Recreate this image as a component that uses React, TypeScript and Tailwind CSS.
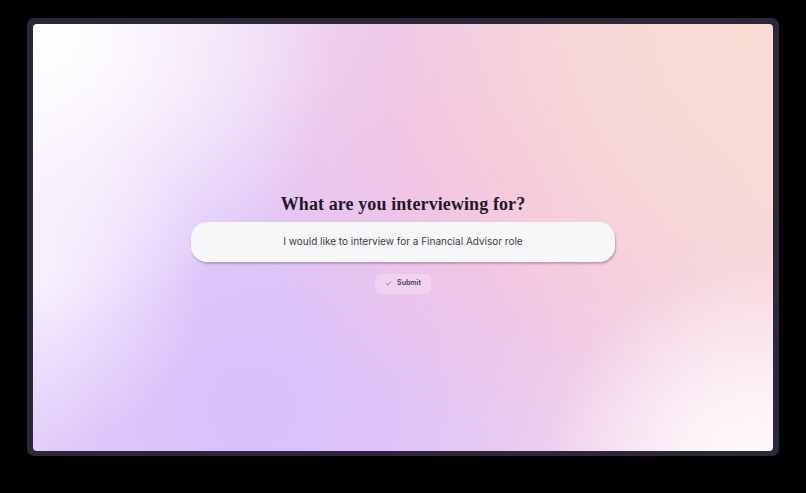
import { Check } from 'lucide-react';

const App = () => {
  return (
    <div className="w-[806px] h-[493px] bg-black flex items-start justify-center pt-[18px] font-['Inter',sans-serif]">
      {/* Marco oscuro */}
      <div className="w-[752px] h-[438px] rounded-[7px] bg-[#2b2839] p-[6px] pb-[5px]">
        <div className="w-full h-full rounded-[4px] overflow-hidden bg-[#efd0ec] bg-[radial-gradient(circle_at_0%_0%,#ffffff_0%,rgba(255,255,255,0.85)_10%,transparent_36%),radial-gradient(circle_at_0%_60%,rgba(250,246,255,0.8)_0%,transparent_22%),radial-gradient(circle_at_97%_104%,#fffafc_0%,rgba(255,250,252,0.8)_8%,transparent_24%),radial-gradient(circle_at_96%_4%,#f9dbd4_0%,rgba(249,219,212,0.8)_20%,transparent_44%),radial-gradient(circle_at_66%_33%,#f3c2de_0%,rgba(243,194,222,0.7)_20%,transparent_48%),radial-gradient(circle_at_29%_90%,#d9c0fb_0%,rgba(217,192,251,0.75)_22%,transparent_52%),linear-gradient(90deg,#ecdaf8_0%,#eccdf0_50%,#f6d6e6_100%)]">
          <div className="h-full flex flex-col items-center justify-center pt-[10px]">
            <h1 className="text-[18px] leading-[24px] font-bold text-[#1e1a2b] font-['Liberation_Serif',serif] tracking-[0.1px]">
              What are you interviewing for?
            </h1>
            <div className="mt-[6px] w-[424px] h-[40px] rounded-[16px] bg-[#f7f7f9] shadow-[1px_2px_2px_rgba(90,70,100,0.35)] flex items-center justify-center">
              <span className="text-[10px] text-[#3b3b40]">I would like to interview for a Financial Advisor role</span>
            </div>
            <button className="mt-[12px] h-[20px] px-[10px] rounded-[6px] bg-white/25 flex items-center gap-[5px] text-[7px] font-semibold text-[#4a3d55]">
              <Check className="w-[7px] h-[7px]" strokeWidth={2} />
              Submit
            </button>
          </div>
        </div>
      </div>
    </div>
  );
};

export default App;
